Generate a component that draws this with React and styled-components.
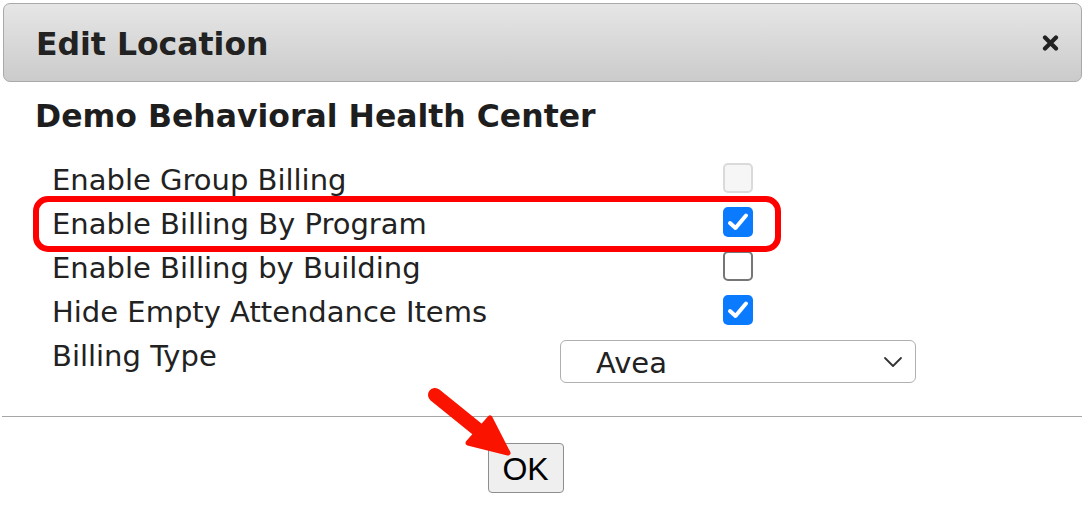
import React from "react";
import styled, { createGlobalStyle } from "styled-components";

const GlobalStyle = createGlobalStyle`
  html, body {
    margin: 0;
    padding: 0;
    background: #ffffff;
  }
  body {
    font-family: "DejaVu Sans", Verdana, sans-serif;
    color: #222222;
  }
`;

const Page = styled.div`
  position: relative;
  width: 1088px;
  height: 530px;
  overflow: hidden;
`;

const Dialog = styled.div`
  padding: 3px 6px 0 3px;
`;

const Header = styled.div`
  height: 77px;
  display: flex;
  align-items: center;
  justify-content: space-between;
  padding: 0 22px 0 32px;
  border: 1px solid #a9a9a9;
  border-radius: 7px;
  background: linear-gradient(to bottom, #e6e6e6, #cbcbcb);
`;

const Title = styled.div`
  font-size: 31.5px;
  font-weight: 700;
  color: #222222;
  padding-top: 2px;
`;

const CloseButton = styled.button`
  border: none;
  background: none;
  padding: 0;
  width: 17px;
  height: 16px;
  display: flex;
  cursor: pointer;
`;

const Body = styled.div`
  padding: 16px 0 0 32px;
`;

const LocationName = styled.div`
  font-size: 31.5px;
  font-weight: 700;
  color: #1e1e1e;
  line-height: 36px;
`;

const SettingsGrid = styled.div`
  display: grid;
  grid-template-columns: 508px 356px;
  grid-auto-rows: 44px;
  padding-left: 49px;
  margin-top: 24px;
`;

const Label = styled.div`
  font-size: 29px;
  line-height: 44px;
  color: #222222;
  white-space: nowrap;
`;

const Cell = styled.div`
  display: flex;
  justify-content: center;
  align-items: center;
  padding-bottom: 5px;
`;

const TallCell = styled.div`
  display: flex;
  align-items: flex-start;
  padding-top: 6px;
  height: 52px;
`;

const Box = styled.span`
  width: 30px;
  height: 30px;
  box-sizing: border-box;
  border-radius: 5px;
  display: flex;
  align-items: center;
  justify-content: center;
  background: ${({ $state }) =>
    $state === "checked" ? "#0a7bff" : $state === "disabled" ? "#f6f6f6" : "#ffffff"};
  border: ${({ $state }) =>
    $state === "checked"
      ? "none"
      : $state === "disabled"
      ? "2px solid #dadada"
      : "2px solid #767676"};
`;

const SelectBox = styled.div`
  width: 356px;
  height: 43px;
  box-sizing: border-box;
  border: 1px solid #b0b0b0;
  border-radius: 6px;
  background: #ffffff;
  display: flex;
  align-items: center;
  justify-content: space-between;
  padding: 0 12px 0 35px;
  font-size: 29px;
  color: #222222;
`;

const SelectText = styled.span`
  padding-top: 2px;
`;

const Divider = styled.div`
  height: 1px;
  background: #a6a6a6;
  margin: 38px 0 0 -1px;
`;

const Footer = styled.div`
  display: flex;
  justify-content: center;
  padding: 26px 34px 0 0;
`;

const OkButton = styled.button`
  width: 76px;
  height: 50px;
  box-sizing: border-box;
  border: 1px solid #8e8e8e;
  border-radius: 4px;
  background: #efefef;
  font-family: "Liberation Sans", Arial, sans-serif;
  font-size: 32px;
  color: #000000;
  padding: 2px 0 0;
  cursor: pointer;
`;

const Highlight = styled.div`
  position: absolute;
  left: 33px;
  top: 196px;
  width: 748px;
  height: 56px;
  box-sizing: border-box;
  border: 6px solid #ff0000;
  border-radius: 15px;
  pointer-events: none;
`;

const ArrowMark = styled.svg`
  position: absolute;
  left: 420px;
  top: 380px;
  pointer-events: none;
`;

const Checkbox = ({ state }) => (
  <Box $state={state}>
    {state === "checked" && (
      <svg width="22" height="20" viewBox="0 0 22 20">
        <path
          d="M3 11 L8.5 16 L19 3.5"
          fill="none"
          stroke="#ffffff"
          strokeWidth="4"
          strokeLinecap="round"
          strokeLinejoin="round"
        />
      </svg>
    )}
  </Box>
);

const settings = [
  { label: "Enable Group Billing", state: "disabled" },
  { label: "Enable Billing By Program", state: "checked" },
  { label: "Enable Billing by Building", state: "unchecked" },
  { label: "Hide Empty Attendance Items", state: "checked" },
];

export default function App() {
  return (
    <Page>
      <GlobalStyle />
      <Dialog>
        <Header>
          <Title>Edit Location</Title>
          <CloseButton aria-label="close">
            <svg width="17" height="16" viewBox="0 0 17 16">
              <path
                d="M3 2.5 L14 13.5 M14 2.5 L3 13.5"
                stroke="#222222"
                strokeWidth="4.2"
                strokeLinecap="round"
              />
            </svg>
          </CloseButton>
        </Header>
        <Body>
          <LocationName>Demo Behavioral Health Center</LocationName>
        </Body>
        <SettingsGrid>
          {settings.map((s) => (
            <React.Fragment key={s.label}>
              <Label>{s.label}</Label>
              <Cell>
                <Checkbox state={s.state} />
              </Cell>
            </React.Fragment>
          ))}
          <Label>Billing Type</Label>
          <TallCell>
            <SelectBox>
              <SelectText>Avea</SelectText>
              <svg width="20" height="12" viewBox="0 0 20 12">
                <path
                  d="M2 2 L10 10 L18 2"
                  fill="none"
                  stroke="#333333"
                  strokeWidth="1.8"
                  strokeLinecap="round"
                  strokeLinejoin="round"
                />
              </svg>
            </SelectBox>
          </TallCell>
        </SettingsGrid>
        <Divider />
        <Footer>
          <OkButton>OK</OkButton>
        </Footer>
      </Dialog>

      <Highlight />
      <ArrowMark width="110" height="90" viewBox="0 0 110 90">
        <line
          x1="15"
          y1="15"
          x2="62"
          y2="53"
          stroke="#fa1400"
          strokeWidth="14"
          strokeLinecap="round"
        />
        <polygon
          points="48,63 70,38 88,73"
          fill="#fa1400"
          stroke="#fa1400"
          strokeWidth="5"
          strokeLinejoin="round"
        />
      </ArrowMark>
    </Page>
  );
}
